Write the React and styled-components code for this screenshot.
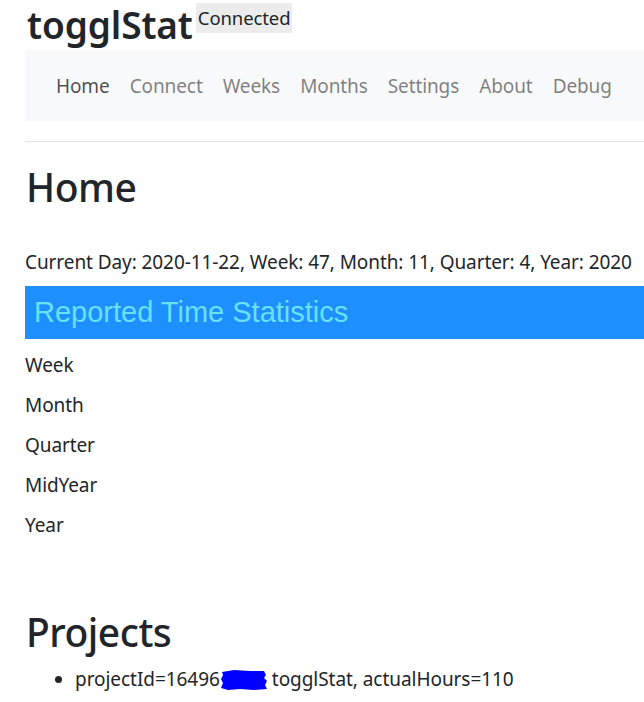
import React from 'react';
import styled, { createGlobalStyle } from 'styled-components';

const GlobalStyle = createGlobalStyle`
  html, body {
    margin: 0;
    padding: 0;
    background: #fff;
    overflow: hidden;
  }

  body {
    font-family: 'Noto Sans', 'Open Sans', sans-serif;
    color: #212529;
  }
`;

const Page = styled.div`
  width: 760px;
  padding-left: 25px;
`;

const Header = styled.header`
  display: flex;
  flex-flow: row nowrap;
  align-items: flex-start;
`;

const Title = styled.h1`
  margin: 0;
  padding-left: 2px;
  font-size: 37px;
  font-weight: 600;
  line-height: 50px;
  letter-spacing: -0.1px;
  color: #212529;
`;

const Badge = styled.span`
  display: inline-block;
  margin: 3px 0 0 3px;
  padding: 0 2px;
  height: 30px;
  line-height: 30px;
  font-size: 18.5px;
  letter-spacing: -0.1px;
  background: #ececec;
  color: #212529;
`;

const Nav = styled.nav`
  display: flex;
  flex-flow: row nowrap;
  align-items: center;
  height: 71px;
  padding-left: 21px;
  background: #f8f9fa;
`;

const NavLink = styled.a`
  padding: 0 10px;
  font-size: 19px;
  letter-spacing: -0.1px;
  color: ${({ active }) => (active ? 'rgba(0, 0, 0, 0.7)' : 'rgba(0, 0, 0, 0.5)')};
  text-decoration: none;
  cursor: pointer;
`;

const Rule = styled.hr`
  margin: 20px 0 0;
  border: 0;
  border-top: 1px solid #e2e2e2;
`;

const PageHeading = styled.h2`
  margin: ${({ top }) => top}px 0 0;
  padding-left: 1px;
  font-size: 39px;
  font-weight: 500;
  line-height: 48px;
  letter-spacing: -0.5px;
  color: #212529;
`;

const Today = styled.p`
  margin: 37px 0 0;
  font-size: 19px;
  line-height: 28px;
  letter-spacing: -0.08px;
  white-space: nowrap;
`;

const Banner = styled.div`
  margin-top: 10px;
  height: 53px;
  padding-left: 9px;
  display: flex;
  align-items: center;
  background: #1e8fff;
  font-family: 'Liberation Sans', Arial, sans-serif;
  font-size: 29px;
  color: #68e1f2;
`;

const StatList = styled.div`
  display: flex;
  flex-flow: column nowrap;
  margin-top: 6px;
`;

const StatRow = styled.div`
  height: 40px;
  line-height: 40px;
  font-size: 19px;
  letter-spacing: -0.1px;
`;

const ProjectList = styled.ul`
  margin: 9px 0 0;
  padding-left: 50px;
  font-size: 19px;
  line-height: 28px;
  letter-spacing: -0.05px;
`;

const ProjectItem = styled.li`
  white-space: nowrap;
`;

const Redacted = styled.svg`
  display: inline-block;
  vertical-align: -5px;
  width: 48px;
  height: 22px;
  margin-right: 4px;
`;

const Scribble = () => (
  <Redacted viewBox="0 0 48 22" aria-hidden="true">
    <path
      d="M2 3 L14 1 L30 2 L44 2 L46 6 L44 9 L47 12 L45 16 L47 20 L34 21 L20 20 L8 21 L1 19 L3 14 L1 10 L3 6 Z"
      fill="#0000ff"
    />
  </Redacted>
);

const navItems = ['Home', 'Connect', 'Weeks', 'Months', 'Settings', 'About', 'Debug'];
const periods = ['Week', 'Month', 'Quarter', 'MidYear', 'Year'];

const App = () => (
  <>
    <GlobalStyle />
    <Page>
      <Header>
        <Title>togglStat</Title>
        <Badge>Connected</Badge>
      </Header>

      <Nav>
        {navItems.map((item) => (
          <NavLink key={item} active={item === 'Home'}>
            {item}
          </NavLink>
        ))}
      </Nav>

      <Rule />

      <PageHeading top={21}>Home</PageHeading>

      <Today>Current Day: 2020-11-22, Week: 47, Month: 11, Quarter: 4, Year: 2020</Today>

      <Banner>Reported Time Statistics</Banner>

      <StatList>
        {periods.map((period) => (
          <StatRow key={period}>{period}</StatRow>
        ))}
      </StatList>

      <PageHeading top={63}>Projects</PageHeading>

      <ProjectList>
        <ProjectItem>
          projectId=16496
          <Scribble />
          togglStat, actualHours=110
        </ProjectItem>
      </ProjectList>
    </Page>
  </>
);

export default App;
